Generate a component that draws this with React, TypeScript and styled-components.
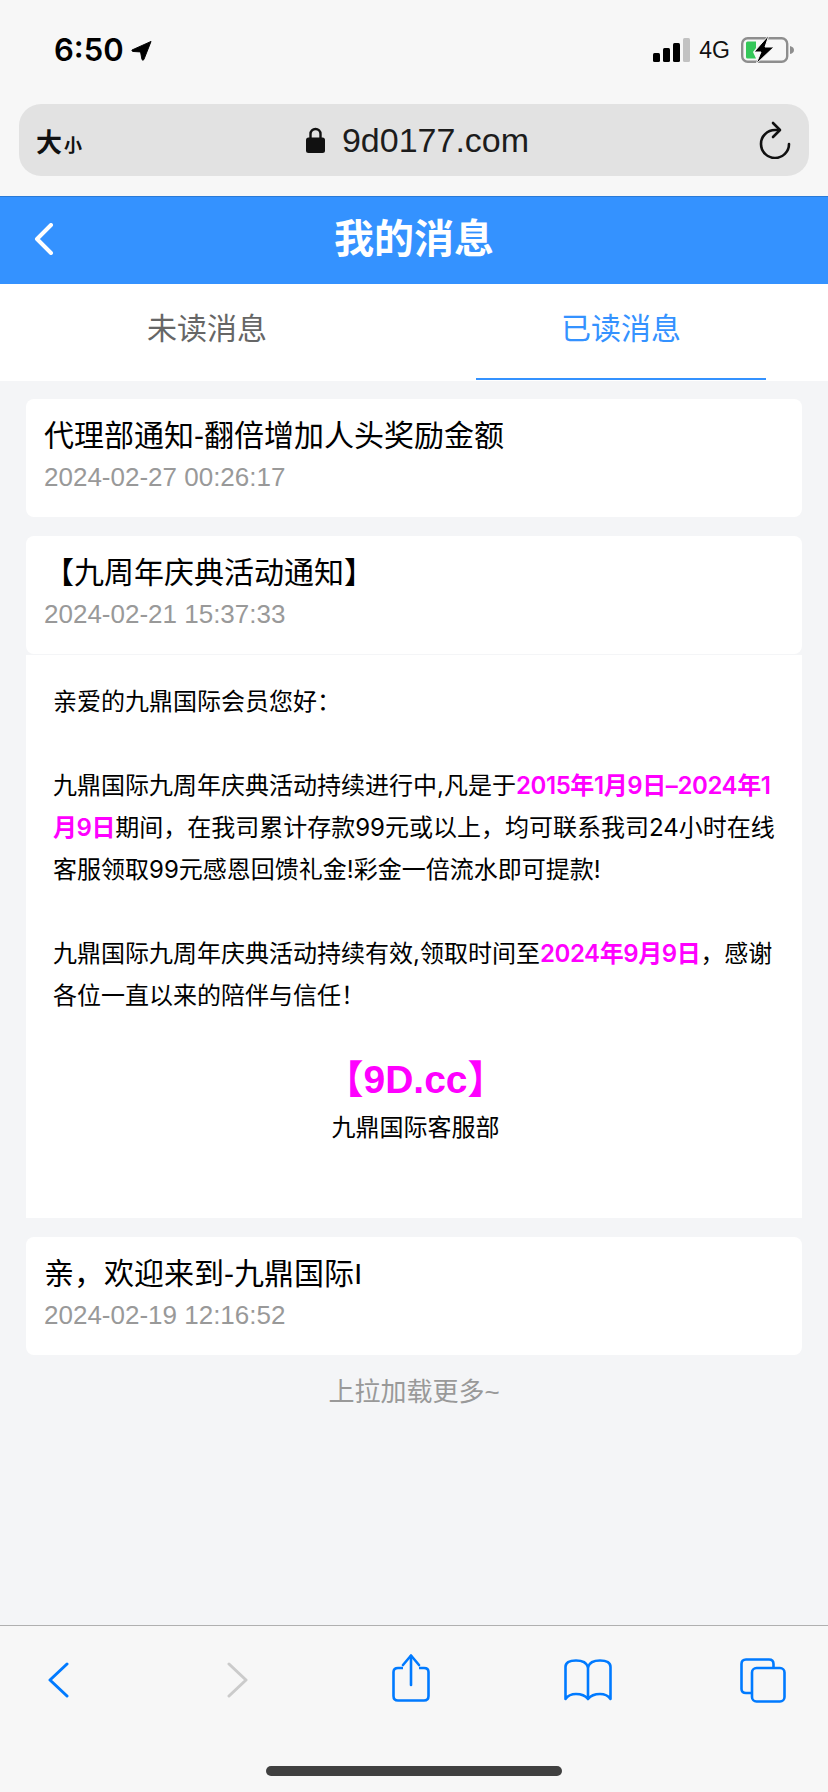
import React from "react";
import styled, { createGlobalStyle } from "styled-components";

const SANS = `"Liberation Sans", "Noto Sans CJK SC", sans-serif`;
const BODY = `Inter, "Noto Sans CJK SC", sans-serif`;

const Global = createGlobalStyle`
  html, body { margin: 0; padding: 0; background: #f4f5f7; }
  * { box-sizing: border-box; }
`;

const Page = styled.div`
  width: 828px;
  height: 1792px;
  display: flex;
  flex-direction: column;
  background: #f4f5f7;
  font-family: ${SANS};
  overflow: hidden;
`;

const Chrome = styled.div`
  height: 196px;
  background: #f7f7f7;
  padding: 0 19px;
  display: flex;
  flex-direction: column;
`;

const StatusBar = styled.div`
  height: 104px;
  padding: 0 15px 0 35px;
  display: flex;
  align-items: flex-start;
  justify-content: space-between;
`;

const TimeGroup = styled.div`
  display: flex;
  align-items: center;
  gap: 7px;
  height: 32px;
  margin-top: 34px;
`;

const Time = styled.span`
  font-family: Inter, sans-serif;
  font-size: 31px;
  font-weight: 600;
  line-height: 32px;
  color: #000;
`;

const StatusIcons = styled.div`
  display: flex;
  align-items: center;
  height: 26px;
  margin-top: 37px;
`;

const NetLabel = styled.span`
  font-size: 23px;
  line-height: 26px;
  color: #111;
  margin: 0 11px 0 9px;
`;

const UrlBar = styled.div`
  height: 72px;
  border-radius: 22px;
  background: #e2e2e2;
  padding: 0 18px 0 17px;
  display: grid;
  grid-template-columns: 1fr auto 1fr;
  align-items: center;
`;

const TextSize = styled.div`
  display: flex;
  align-items: baseline;
  font-weight: 700;
  color: #111;
`;

const Big = styled.span`
  font-size: 26px;
`;

const Small = styled.span`
  font-size: 18px;
  margin-left: 2px;
`;

const Domain = styled.div`
  display: flex;
  align-items: center;
  gap: 17px;
  margin-left: 8px;
  font-size: 34px;
  line-height: 40px;
  color: #1c1c1c;
`;

const Reload = styled.div`
  display: flex;
  justify-content: flex-end;
`;

const Header = styled.header`
  height: 88px;
  padding-bottom: 4px;
  background: #3492ff;
  border-top: 1px solid #2a7ad6;
  position: relative;
  display: flex;
  align-items: center;
  justify-content: center;
`;

const HeaderBack = styled.svg`
  position: absolute;
  left: 34px;
  top: 26px;
`;

const HeaderTitle = styled.h1`
  margin: 0;
  font-size: 40px;
  font-weight: 700;
  line-height: 50px;
  color: #fff;
`;

const Tabs = styled.nav`
  height: 97px;
  background: #fff;
  display: grid;
  grid-template-columns: 1fr 1fr;
`;

const Tab = styled.div<{ $active?: boolean }>`
  position: relative;
  display: flex;
  align-items: flex-start;
  justify-content: center;
  padding-top: 24px;
  font-size: 30px;
  line-height: 42px;
  color: ${(p) => (p.$active ? "#3492ff" : "#666")};

  &::after {
    content: "";
    display: ${(p) => (p.$active ? "block" : "none")};
    position: absolute;
    left: 62px;
    width: 290px;
    bottom: 1px;
    height: 2px;
    background: #3492ff;
  }
`;

const List = styled.main`
  flex: 1;
  padding: 18px 26px 0;
  display: flex;
  flex-direction: column;
`;

const Item = styled.section`
  margin-bottom: 19px;
`;

const Card = styled.div`
  height: 118px;
  background: #fff;
  border-radius: 8px;
  padding: 15px 18px 19px;
`;

const Title = styled.div`
  font-size: 30px;
  line-height: 44px;
  color: #000;
  white-space: nowrap;
`;

const DateText = styled.div`
  margin-top: -1px;
  font-size: 26px;
  line-height: 40px;
  color: #999;
`;

const Body = styled.div`
  margin-top: 1px;
  height: 563px;
  background: #fff;
  padding: 26px 24px 0 27px;
  font-family: ${BODY};
  font-size: 24px;
  line-height: 42px;
  color: #000;
`;

const Para = styled.p`
  margin: 0 0 42px;
`;

const Pink = styled.b`
  color: #ff00ff;
  font-weight: 600;
  letter-spacing: -0.4px;
`;

const Brand = styled.div`
  text-align: center;
  font-family: ${SANS};
  font-size: 39px;
  font-weight: 700;
  line-height: 42px;
  color: #ff00ff;
`;

const Signature = styled.div`
  margin-top: 6px;
  text-align: center;
`;

const LoadMore = styled.div`
  margin-top: -1px;
  text-align: center;
  font-size: 26px;
  line-height: 38px;
  color: #999;
`;

const Toolbar = styled.footer`
  height: 167px;
  background: #f7f7f7;
  border-top: 1px solid #b0b0b0;
  display: flex;
  flex-direction: column;
`;

const ToolRow = styled.div`
  height: 108px;
  display: grid;
  grid-template-columns: 116px 243px 104px 249px 102px;
  justify-items: center;
  align-items: center;
`;

const HomeBar = styled.div`
  width: 296px;
  height: 10px;
  margin: 32px auto 0;
  border-radius: 5px;
  background: #404040;
`;

const BatteryIcon = styled.svg`
  overflow: visible;
`;

const BLUE = "#007aff";

export default function App() {
  return (
    <Page>
      <Global />
      <Chrome>
        <StatusBar>
          <TimeGroup>
            <Time>6:50</Time>
            <svg width="21" height="21" viewBox="0 0 22 22" aria-hidden="true">
              <path d="M21 1.5 L1 10.5 Q0.5 11.5 2 12 L10 12.5 L11.5 20.5 Q12.5 22 13.5 20.5 Z" fill="#000" stroke="#000" strokeWidth="1" strokeLinejoin="round" />
            </svg>
          </TimeGroup>
          <StatusIcons>
            <svg width="37" height="24" viewBox="0 0 37 24" aria-hidden="true">
              <rect x="0" y="15" width="7" height="9" rx="1.5" fill="#000" />
              <rect x="10" y="10" width="7" height="14" rx="1.5" fill="#000" />
              <rect x="20" y="5" width="7" height="19" rx="1.5" fill="#000" />
              <rect x="30" y="0" width="7" height="24" rx="1.5" fill="#c2c2c2" />
            </svg>
            <NetLabel>4G</NetLabel>
            <BatteryIcon width="53" height="26" viewBox="0 0 53 26" aria-hidden="true">
              <rect x="1.2" y="1.2" width="45" height="23.6" rx="5.5" fill="none" stroke="#8e8e8e" strokeWidth="2.4" />
              <path d="M49 9 Q53 10 53 13 Q53 16 49 17 Z" fill="#8e8e8e" />
              <path d="M5 6 Q5 4.5 6.5 4.5 H15 V11 L12 15 L15 21.5 H6.5 Q5 21.5 5 20 Z" fill="#34c759" />
              <path d="M28 -2 L13 15 H20 L15 27 L33 10 H24 Z" fill="#000" stroke="#f7f7f7" strokeWidth="1" />
            </BatteryIcon>
          </StatusIcons>
        </StatusBar>
        <UrlBar>
          <TextSize>
            <Big>大</Big>
            <Small>小</Small>
          </TextSize>
          <Domain>
            <svg width="19" height="26" viewBox="0 0 19 26" aria-hidden="true">
              <path d="M4.5 11 V7 A5 5 0 0 1 14.5 7 V11" fill="none" stroke="#111" strokeWidth="2.4" />
              <rect x="0" y="10.5" width="19" height="15.5" rx="2.5" fill="#111" />
            </svg>
            9d0177.com
          </Domain>
          <Reload>
            <svg width="32" height="38" viewBox="0 0 32 38" fill="none" aria-hidden="true">
              <path d="M30 23 A14 14 0 1 1 16 9 H20" stroke="#111" strokeWidth="2.6" strokeLinecap="round" />
              <path d="M14 2 L21 9 L14 16" stroke="#111" strokeWidth="2.6" strokeLinecap="round" strokeLinejoin="round" />
            </svg>
          </Reload>
        </UrlBar>
      </Chrome>

      <Header>
        <HeaderBack width="20" height="32" viewBox="0 0 20 32" fill="none" aria-hidden="true">
          <path d="M17 2 L3 16 L17 30" stroke="#fff" strokeWidth="4" strokeLinecap="round" strokeLinejoin="round" />
        </HeaderBack>
        <HeaderTitle>我的消息</HeaderTitle>
      </Header>

      <Tabs>
        <Tab>未读消息</Tab>
        <Tab $active>已读消息</Tab>
      </Tabs>

      <List>
        <Item>
          <Card>
            <Title>代理部通知-翻倍增加人头奖励金额</Title>
            <DateText>2024-02-27 00:26:17</DateText>
          </Card>
        </Item>
        <Item>
          <Card>
            <Title>【九周年庆典活动通知】</Title>
            <DateText>2024-02-21 15:37:33</DateText>
          </Card>
          <Body>
            <Para>亲爱的九鼎国际会员您好：</Para>
            <Para>
              九鼎国际九周年庆典活动持续进行中,凡是于<Pink>2015年1月9日–2024年1月9日</Pink>期间，在我司累计存款99元或以上，均可联系我司24小时在线客服领取99元感恩回馈礼金!彩金一倍流水即可提款!
            </Para>
            <Para>
              九鼎国际九周年庆典活动持续有效,领取时间至<Pink>2024年9月9日</Pink>，感谢各位一直以来的陪伴与信任！
            </Para>
            <Brand>【9D.cc】</Brand>
            <Signature>九鼎国际客服部</Signature>
          </Body>
        </Item>
        <Item>
          <Card>
            <Title>亲，欢迎来到-九鼎国际I</Title>
            <DateText>2024-02-19 12:16:52</DateText>
          </Card>
        </Item>
        <LoadMore>上拉加载更多~</LoadMore>
      </List>

      <Toolbar>
        <ToolRow>
          <svg width="21" height="36" viewBox="0 0 21 36" fill="none" aria-hidden="true">
            <path d="M19 2 L2 18 L19 34" stroke={BLUE} strokeWidth="3" strokeLinecap="round" strokeLinejoin="round" />
          </svg>
          <svg width="21" height="36" viewBox="0 0 21 36" fill="none" aria-hidden="true">
            <path d="M2 2 L19 18 L2 34" stroke="#cbcbcb" strokeWidth="3" strokeLinecap="round" strokeLinejoin="round" />
          </svg>
          <svg width="38" height="52" viewBox="0 0 38 52" fill="none" aria-hidden="true">
            <path d="M11 14 H6 Q1.5 14 1.5 18 V42 Q1.5 46.5 6 46.5 H32 Q36.5 46.5 36.5 42 V18 Q36.5 14 32 14 H27" stroke={BLUE} strokeWidth="2.6" />
            <path d="M19 2 V31" stroke={BLUE} strokeWidth="2.6" strokeLinecap="round" />
            <path d="M11 11 L19 1.5 L27 11" stroke={BLUE} strokeWidth="2.6" strokeLinecap="round" strokeLinejoin="round" />
          </svg>
          <svg width="48" height="42" viewBox="0 0 48 42" fill="none" aria-hidden="true">
            <path d="M24 8 Q22 1.5 12 1.5 Q1.5 1.5 1.5 8 V40 Q5 35 12 35 Q20 35 24 40 Q28 35 36 35 Q43 35 46.5 40 V8 Q46.5 1.5 36 1.5 Q26 1.5 24 8 Z" stroke={BLUE} strokeWidth="2.6" strokeLinejoin="round" />
            <path d="M24 8 V40" stroke={BLUE} strokeWidth="2.6" />
          </svg>
          <svg width="46" height="45" viewBox="0 0 46 45" fill="none" aria-hidden="true">
            <path d="M11 35 H6 Q1.5 35 1.5 31 V6 Q1.5 1.5 6 1.5 H29 Q33.5 1.5 33.5 6 V10" stroke={BLUE} strokeWidth="2.6" />
            <rect x="12" y="10" width="32.5" height="33.5" rx="4.5" stroke={BLUE} strokeWidth="2.6" />
          </svg>
        </ToolRow>
        <HomeBar />
      </Toolbar>
    </Page>
  );
}
